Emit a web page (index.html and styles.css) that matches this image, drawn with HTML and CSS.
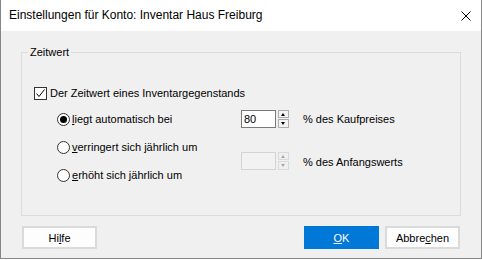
FILE: index.html
```html
<!DOCTYPE html>
<html lang="de">
<head>
    <meta charset="UTF-8">
    <title>Einstellungen für Konto</title>
    <link rel="stylesheet" href="styles.css">
</head>
<body>
    <div class="window">
        <div class="titlebar">
            <span class="title">Einstellungen für Konto: Inventar Haus Freiburg</span>
            <span class="close">
                <svg width="10" height="10" viewBox="0 0 10 10"><path d="M0.5 0.5 L9.5 9.5 M9.5 0.5 L0.5 9.5" stroke="#000" stroke-width="1" fill="none"/></svg>
            </span>
        </div>

        <div class="content">
            <fieldset class="group">
                <legend>Zeitwert</legend>

                <label class="check-row">
                    <span class="checkbox">
                        <svg width="11" height="11" viewBox="0 0 11 11"><path d="M1.5 5.5 L4 8.5 L9.5 1.5" stroke="#000" stroke-width="1" fill="none"/></svg>
                    </span>
                    <span>Der Zeitwert eines Inventargegenstands</span>
                </label>

                <div class="options">
                    <label class="radio-row"><span class="radio checked"></span><span><u>l</u>iegt automatisch bei</span></label>
                    <div class="spin">
                        <span class="field">80</span>
                        <span class="spinner">
                            <span class="arrow up"></span>
                            <span class="arrow down"></span>
                        </span>
                    </div>
                    <span class="suffix">% des Kaufpreises</span>

                    <label class="radio-row"><span class="radio"></span><span><u>v</u>erringert sich jährlich um</span></label>
                    <div class="spin disabled span-two">
                        <span class="field"></span>
                        <span class="spinner">
                            <span class="arrow up"></span>
                            <span class="arrow down"></span>
                        </span>
                    </div>
                    <span class="suffix span-two">% des Anfangswerts</span>

                    <label class="radio-row"><span class="radio"></span><span><u>e</u>rhöht sich jährlich um</span></label>
                </div>
            </fieldset>

            <div class="buttons">
                <button class="btn">Hi<u>l</u>fe</button>
                <span class="spacer"></span>
                <button class="btn primary"><u>O</u>K</button>
                <button class="btn">Abbre<u>c</u>hen</button>
            </div>
        </div>
    </div>
</body>
</html>
```

FILE: styles.css
```css
body {
    margin: 0;
    background: #ffffff;
    font-family: 'Liberation Sans', Arial, sans-serif;
    font-size: 11px;
    color: #000;
}

.window {
    width: 480px;
    height: 258px;
    border: 1px solid #868686;
    border-top: none;
    background: #f0f0f0;
    display: flex;
    flex-direction: column;
}

.titlebar {
    height: 31px;
    background: #fff;
    display: flex;
    align-items: center;
    padding: 0 10px 0 8px;
    flex-shrink: 0;
}

.title {
    flex: 1;
    font-size: 12px;
    margin-top: -1px;
}

.close {
    display: flex;
}

.content {
    padding: 13px 20px 0 20px;
}

.group {
    margin: 0;
    padding: 0 0 26px 0;
    border: 1px solid #dcdcdc;
}

.group legend {
    margin-left: 6px;
    padding: 0 2px;
    line-height: 16px;
}

.check-row {
    display: flex;
    align-items: center;
    gap: 3px;
    height: 16px;
    margin: 25px 0 0 12px;
}

.checkbox {
    width: 11px;
    height: 11px;
    border: 1px solid #333;
    background: #fff;
    display: flex;
}

.options {
    display: grid;
    grid-template-columns: 184px 62px auto;
    grid-template-rows: 28px 28px 28px;
    margin: 4px 0 0 35px;
}

.radio-row {
    display: flex;
    align-items: center;
    gap: 2px;
    grid-column: 1;
}

.radio {
    width: 11px;
    height: 11px;
    border: 1px solid #333;
    border-radius: 50%;
    background: #fff;
    position: relative;
}

.radio.checked::after {
    content: "";
    position: absolute;
    left: 2px;
    top: 2px;
    width: 7px;
    height: 7px;
    border-radius: 50%;
    background: #000;
}

.spin {
    display: flex;
    align-items: stretch;
    gap: 2px;
    height: 18px;
    align-self: center;
    margin-top: -1px;
}

.field {
    width: 29px;
    border: 1px solid #7a7a7a;
    background: #fff;
    padding: 0 2px;
    line-height: 16px;
}

.spinner {
    width: 11px;
    display: flex;
    flex-direction: column;
    gap: 1px;
}

.arrow {
    flex: 1;
    border: 1px solid #adadad;
    background: #f4f4f4;
    position: relative;
}

.arrow::after {
    content: "";
    position: absolute;
    left: 2px;
    width: 0;
    height: 0;
    border-left: 2.5px solid transparent;
    border-right: 2.5px solid transparent;
}

.arrow.up::after {
    top: 2px;
    border-bottom: 3px solid #000;
}

.arrow.down::after {
    top: 2px;
    border-top: 3px solid #000;
}

.spin.disabled .field {
    border-color: #d4d4d4;
    background: #f2f2f2;
}

.spin.disabled .arrow {
    border-color: #dadada;
    background: #f0f0f0;
}

.spin.disabled .arrow.up::after {
    border-bottom-color: #a8a8a8;
}

.spin.disabled .arrow.down::after {
    border-top-color: #a8a8a8;
}

.span-two {
    grid-row: 2 / 4;
}

.suffix {
    align-self: center;
}

.spin.span-two {
    grid-column: 2;
}

.suffix.span-two {
    grid-column: 3;
    margin-top: 2px;
}

.buttons {
    display: flex;
    gap: 6px;
    margin: 10px 1px 0 1px;
}

.spacer {
    flex: 1;
}

.btn {
    width: 75px;
    height: 23px;
    font-family: inherit;
    font-size: 11px;
    color: #000;
    background: #fdfdfd;
    border: 2px solid #dadada;
    padding: 0;
}

.btn.primary {
    background: #0078d7;
    border-color: #0078d7;
    color: #fff;
}
```
